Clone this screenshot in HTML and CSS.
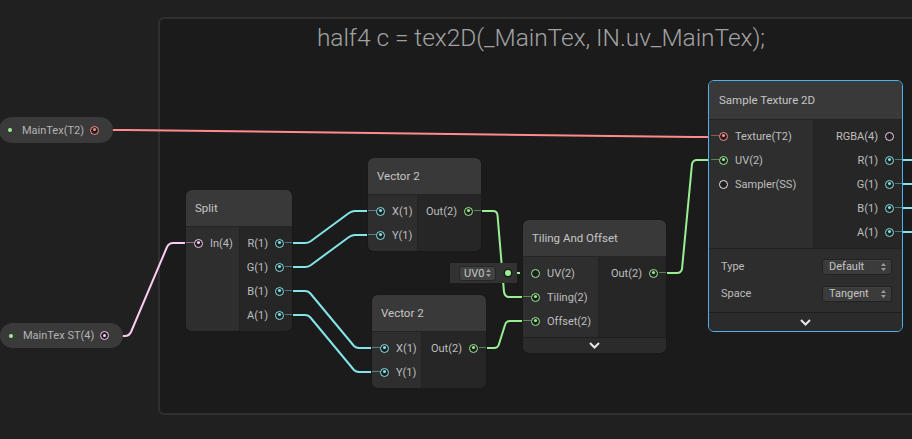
FILE: index.html
```html
<!DOCTYPE html>
<html>
<head>
<meta charset="utf-8">
<link rel="stylesheet" href="styles.css">
</head>
<body>
<div class="canvas">
  <div class="group">
    <div class="group-title">half4 c = tex2D(_MainTex, IN.uv_MainTex);</div>
  </div>

  <svg class="wires" width="912" height="439" viewBox="0 0 912 439">
    <g fill="none" stroke-width="2" stroke-linecap="round" stroke-linejoin="round">
      <path stroke="#ff8b8b" d="M112 130 L126 130 L694 137 L708 137"/>
      <path stroke="#fbcbf4" d="M122 336 L125 336 Q129 336 131 332 L167 247 Q169 243 173 243 L186 243"/>
      <path stroke="#84e4e7" d="M292 243 L305 243 Q308 243 311 241 L349 213 Q352 211 355 211 L368 211"/>
      <path stroke="#84e4e7" d="M292 267 L305 267 Q308 267 311 265 L349 237 Q352 235 355 235 L368 235"/>
      <path stroke="#84e4e7" d="M292 291 L305 291 Q308 291 310 293 L354 346 Q356 348 359 348 L372 348"/>
      <path stroke="#84e4e7" d="M292 315 L305 315 Q308 315 310 317 L354 370 Q356 372 359 372 L372 372"/>
      <path stroke="#9aef92" d="M481 211 L493 211 Q497 211 497.5 215 L504 292 Q505 297 509 297 L523 297"/>
      <path stroke="#9aef92" d="M486 348 L494 348 Q498 348 499 344 L505 325 Q506 321 510 321 L523 321"/>
      <path stroke="#9aef92" d="M666 273 L677 273 Q681 273 682 269 L692 164 Q693 160 697 160 L708 160"/>
      <path stroke="#9aef92" stroke-dasharray="3 3" stroke-linecap="butt" d="M511 273 L523 273"/>
      <path stroke="#84e4e7" d="M902 160 L912 160 M902 184 L912 184 M902 208 L912 208 M902 232 L912 232"/>
    </g>
  </svg>

  <div class="prop prop-tex">
    <span class="prop-dot"></span>
    <span class="prop-label">MainTex(T2)</span>
    <span class="port c-tex on"></span>
  </div>
  <div class="prop prop-st">
    <span class="prop-dot"></span>
    <span class="prop-label">MainTex ST(4)</span>
    <span class="port c-v4 on"></span>
  </div>

  <div class="node n-split">
    <div class="hdr">Split</div>
    <div class="body">
      <div class="col in">
        <div class="row"><span class="port c-v4 on"></span><span>In(4)</span></div>
      </div>
      <div class="col out">
        <div class="row"><span>R(1)</span><span class="port c-v1 on"></span></div>
        <div class="row"><span>G(1)</span><span class="port c-v1 on"></span></div>
        <div class="row"><span>B(1)</span><span class="port c-v1 on"></span></div>
        <div class="row"><span>A(1)</span><span class="port c-v1 on"></span></div>
      </div>
    </div>
  </div>

  <div class="node n-vec-a">
    <div class="hdr">Vector 2</div>
    <div class="body">
      <div class="col in">
        <div class="row"><span class="port c-v1 on"></span><span>X(1)</span></div>
        <div class="row"><span class="port c-v1 on"></span><span>Y(1)</span></div>
      </div>
      <div class="col out">
        <div class="row"><span>Out(2)</span><span class="port c-v2 on"></span></div>
      </div>
    </div>
  </div>

  <div class="node n-vec-b">
    <div class="hdr">Vector 2</div>
    <div class="body">
      <div class="col in">
        <div class="row"><span class="port c-v1 on"></span><span>X(1)</span></div>
        <div class="row"><span class="port c-v1 on"></span><span>Y(1)</span></div>
      </div>
      <div class="col out">
        <div class="row"><span>Out(2)</span><span class="port c-v2 on"></span></div>
      </div>
    </div>
  </div>

  <div class="uv-field">
    <span class="mini-drop">UV0<svg class="updown" width="5" height="8" viewBox="0 0 5 8"><path d="M0 3 L2.5 0 L5 3 Z M0 5 L2.5 8 L5 5 Z" fill="#9a9a9a"/></svg></span>
    <span class="uv-dot"></span>
  </div>

  <div class="node n-tiling">
    <div class="hdr">Tiling And Offset</div>
    <div class="body">
      <div class="col in">
        <div class="row"><span class="port c-v2"></span><span>UV(2)</span></div>
        <div class="row"><span class="port c-v2 on"></span><span>Tiling(2)</span></div>
        <div class="row"><span class="port c-v2 on"></span><span>Offset(2)</span></div>
      </div>
      <div class="col out">
        <div class="row"><span>Out(2)</span><span class="port c-v2 on"></span></div>
      </div>
    </div>
    <div class="collapse">
      <svg width="11" height="7" viewBox="0 0 11 7"><path d="M1 1 L5.5 5.5 L10 1" fill="none" stroke="#e8e8e8" stroke-width="2"/></svg>
    </div>
  </div>

  <div class="node n-sample">
    <div class="hdr">Sample Texture 2D</div>
    <div class="body">
      <div class="col in">
        <div class="row"><span class="port c-tex on"></span><span>Texture(T2)</span></div>
        <div class="row"><span class="port c-v2 on"></span><span>UV(2)</span></div>
        <div class="row"><span class="port c-ss"></span><span>Sampler(SS)</span></div>
      </div>
      <div class="col out">
        <div class="row"><span>RGBA(4)</span><span class="port c-v4 nostub"></span></div>
        <div class="row"><span>R(1)</span><span class="port c-v1 on"></span></div>
        <div class="row"><span>G(1)</span><span class="port c-v1 on"></span></div>
        <div class="row"><span>B(1)</span><span class="port c-v1 on"></span></div>
        <div class="row"><span>A(1)</span><span class="port c-v1 on"></span></div>
      </div>
    </div>
    <div class="controls">
      <div class="ctrl"><span>Type</span><span class="drop">Default<svg class="updown" width="5" height="8" viewBox="0 0 5 8"><path d="M0 3 L2.5 0 L5 3 Z M0 5 L2.5 8 L5 5 Z" fill="#9a9a9a"/></svg></span></div>
      <div class="ctrl"><span>Space</span><span class="drop">Tangent<svg class="updown" width="5" height="8" viewBox="0 0 5 8"><path d="M0 3 L2.5 0 L5 3 Z M0 5 L2.5 8 L5 5 Z" fill="#9a9a9a"/></svg></span></div>
    </div>
    <div class="collapse tall">
      <svg width="11" height="7" viewBox="0 0 11 7"><path d="M1 1 L5.5 5.5 L10 1" fill="none" stroke="#e8e8e8" stroke-width="2"/></svg>
    </div>
  </div>
</div>
</body>
</html>
```
FILE: styles.css
```css
* { box-sizing: border-box; }
html, body { margin: 0; padding: 0; background: #202020; }
body {
  font-family: Roboto, "Noto Sans", "Liberation Sans", sans-serif;
  font-size: 11px;
  color: #bebebe;
}
.canvas {
  position: relative;
  width: 912px;
  height: 439px;
  overflow: hidden;
  background: #202020;
}
.group {
  position: absolute;
  left: 158px;
  top: 17px;
  width: 770px;
  height: 398px;
  border: 2px solid #2f2f2f;
  border-radius: 6px;
  background: #1b1b1b;
}
.group-title {
  text-align: center;
  font-family: Roboto, "Open Sans", sans-serif;
  font-weight: 300;
  font-size: 24.5px;
  line-height: 30px;
  padding-top: 4px;
  padding-right: 4px;
  letter-spacing: -0.05px;
  color: #a2a2a2;
}
.wires {
  position: absolute;
  left: 0;
  top: 0;
}

/* property pills */
.prop {
  position: absolute;
  display: flex;
  align-items: center;
  height: 26px;
  border-radius: 13px;
  background: #3a3a3a;
  color: #b4b4b4;
  padding-left: 9px;
  padding-right: 14px;
}
.prop-tex { left: -1px; top: 117px; width: 114px; }
.prop-st { left: 0; top: 323px; width: 123px; height: 25px; }
.prop-dot {
  width: 4px;
  height: 4px;
  border-radius: 50%;
  background: #9aef92;
  margin-right: 10px;
}
.prop-label { flex: 1; }

/* ports */
.port {
  position: relative;
  flex: none;
  width: 9px;
  height: 9px;
  border-radius: 50%;
  border: 1.5px solid var(--pc);
  background: #1f1f1f;
}
.port.on::after {
  content: "";
  position: absolute;
  left: 1.5px;
  top: 1.5px;
  width: 3px;
  height: 3px;
  border-radius: 50%;
  background: var(--pc);
}
.c-v1 { --pc: #84e4e7; }
.c-v2 { --pc: #9aef92; }
.c-v4 { --pc: #fbcbf4; }
.c-tex { --pc: #ff8b8b; }
.c-ss { --pc: #e8e8e8; }

/* nodes */
.node {
  position: absolute;
  border-radius: 6px;
  overflow: hidden;
  background: #262626;
  box-shadow: 0 0 0 1px #191919;
}
.hdr {
  height: 37px;
  display: flex;
  align-items: center;
  padding-left: 9px;
  background: #393939;
  border-bottom: 1px solid #242424;
  color: #c6c6c6;
  font-size: 11.5px;
}
.body { display: flex; }
.col { padding: 4px 0; }
.col.in { background: #2e2e2e; border-right: 1px solid #232323; }
.col.out { flex: 1; background: #262626; }
.row {
  height: 24px;
  display: flex;
  align-items: center;
  gap: 7px;
}
.in .row { padding-left: 8px; }
.out .row { justify-content: flex-end; padding-right: 8px; }
.in .port.on::before,
.out .port.on::before {
  content: "";
  position: absolute;
  top: 2.5px;
  height: 1px;
  width: 8px;
  background: var(--pc);
  opacity: 0.45;
}
.in .port.on::before { left: -9.5px; }
.out .port.on::before { right: -9.5px; }

.n-split { left: 186px; top: 190px; width: 106px; }
.n-split .col.in { width: 54px; }
.n-vec-a { left: 368px; top: 158px; width: 113px; }
.n-vec-a .col.in { width: 50px; }
.n-vec-b { left: 372px; top: 295px; width: 114px; }
.n-vec-b .col.in { width: 50px; }
.n-tiling { left: 523px; top: 220px; width: 143px; }
.n-tiling .col.in { width: 76px; }

.collapse {
  height: 16px;
  display: flex;
  align-items: center;
  justify-content: center;
  background: #2b2b2b;
  border-top: 1px solid #1e1e1e;
}
.collapse.tall { height: 19px; }

.n-sample {
  left: 708px;
  top: 80px;
  width: 195px;
  border: 1px solid #4db3ee;
  box-shadow: none;
}
.n-sample .hdr { height: 39px; padding-left: 10px; }
.n-sample .col.in { width: 105px; }
.n-sample .in .row { padding-left: 10px; }
.controls {
  background: #2d2d2d;
  border-top: 1px solid #222;
  padding: 4px 10px 5px 12px;
}
.ctrl {
  height: 27px;
  display: flex;
  align-items: center;
  justify-content: space-between;
  color: #bcbcbc;
}
.drop {
  width: 70px;
  height: 16px;
  display: flex;
  align-items: center;
  justify-content: space-between;
  padding: 0 5px 0 6px;
  background: #3b3b3b;
  border: 1px solid #222;
  border-radius: 3px;
  color: #c4c4c4;
  box-shadow: inset 0 1px 0 #444;
}

.uv-field {
  position: absolute;
  left: 450px;
  top: 263px;
  width: 67px;
  height: 20px;
  background: #323232;
  display: flex;
  align-items: center;
  padding-left: 9px;
}
.mini-drop {
  width: 37px;
  height: 15px;
  display: flex;
  align-items: center;
  justify-content: space-between;
  padding: 0 4px 0 4px;
  background: #424242;
  border: 1px solid #262626;
  border-radius: 3px;
  color: #c4c4c4;
}
.uv-dot {
  width: 6px;
  height: 6px;
  margin-left: 9px;
  border-radius: 50%;
  background: #9aef92;
  box-shadow: 0 0 0 1.5px #1c1c1c;
}
```
